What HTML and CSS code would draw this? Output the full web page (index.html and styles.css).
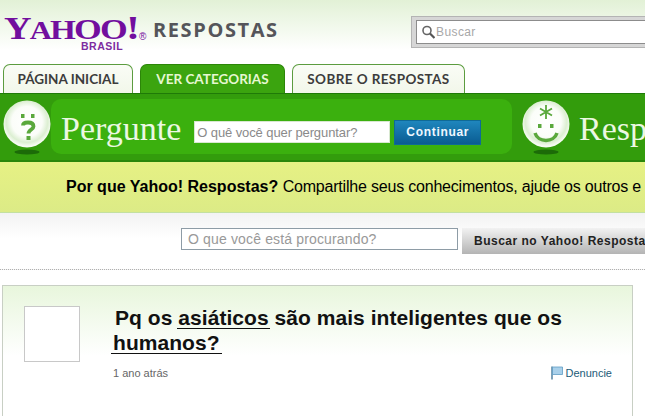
FILE: index.html
```html
<!DOCTYPE html>
<html lang="pt-BR">
<head>
    <meta charset="UTF-8">
    <title>Yahoo! Respostas</title>
    <link rel="stylesheet" href="styles.css">
</head>
<body>
    <div class="page">
        <div class="header">
            <div class="logo">
                <div class="logo-yahoo">
                    <span class="logo-word"><span class="y">Y</span><span class="a">A</span><span class="h">H</span>OO<span class="bang">!</span></span>
                    <span class="logo-reg">®</span>
                    <span class="logo-brasil">BRASIL</span>
                </div>
                <span class="logo-respostas">RESPOSTAS</span>
            </div>
            <div class="top-search">
                <div class="top-search-inner">
                    <svg class="lens" width="13" height="14" viewBox="0 0 13 14">
                        <circle cx="5" cy="5.5" r="4" fill="none" stroke="#666" stroke-width="1.6"/>
                        <path d="M8 8.500L12.500 13" stroke="#555" stroke-width="2.200"/>
                    </svg>
                    <span>Buscar</span>
                </div>
            </div>
        </div>

        <div class="tabs">
            <a class="tab tab-home">PÁGINA INICIAL</a>
            <a class="tab tab-cats active">VER CATEGORIAS</a>
            <a class="tab tab-about">SOBRE O RESPOSTAS</a>
        </div>

        <div class="green-bar">
            <div class="ball">
                <svg width="48" height="56" viewBox="0 0 48 56">
                    <defs>
                        <radialGradient id="shine" cx="50%" cy="45%" r="52%">
                            <stop offset="0" stop-color="#ffffff"/>
                            <stop offset="0.62" stop-color="#fbfdf9"/>
                            <stop offset="0.85" stop-color="#dcefd2"/>
                            <stop offset="1" stop-color="#f6fbf2"/>
                        </radialGradient>
                    </defs>
                    <ellipse cx="24" cy="52" rx="12.500" ry="2.500" fill="#1c6b08"/>
                    <circle cx="24" cy="24" r="23.500" fill="url(#shine)"/>
                    <rect x="18" y="14" width="3.500" height="4" fill="#5aa83c"/>
                    <rect x="28" y="14" width="3.500" height="4" fill="#5aa83c"/>
                    <path d="M20 25.500C20 23 22 22.500 25 22.500C28.500 22.500 30.500 24 30.500 26.500C30.500 29.500 25.500 29.500 25.500 33.500" fill="none" stroke="#5aa83c" stroke-width="3.800"/>
                    <rect x="23.500" y="36" width="4" height="4" fill="#5aa83c"/>
                </svg>
            </div>
            <div class="ask-box">
                <span class="bar-title bar-title-ask">Pergunte</span>
                <div class="ask-input">O quê você quer perguntar?</div>
                <div class="ask-btn">Continuar</div>
            </div>
            <div class="ball second">
                <svg width="48" height="56" viewBox="0 0 48 56">
                    <ellipse cx="24" cy="52" rx="12.500" ry="2.500" fill="#1c6b08"/>
                    <circle cx="24" cy="24" r="23.500" fill="url(#shine)"/>
                    <path d="M24 5V19M18 8.500L30 15.500M18 15.500L30 8.500" stroke="#5aa83c" stroke-width="1.800"/>
                    <rect x="16" y="24" width="3.500" height="4" fill="#5aa83c"/>
                    <rect x="28" y="24" width="3.500" height="4" fill="#5aa83c"/>
                    <path d="M13 33C16 43 32 43 35 33" fill="none" stroke="#5aa83c" stroke-width="3.500"/>
                </svg>
            </div>
            <span class="bar-title bar-title-cut">Respostas</span>
        </div>

        <div class="why-bar">
            <p><b>Por que Yahoo! Respostas?</b> <span class="why-text">Compartilhe seus conhecimentos, ajude os outros e divirta-se</span></p>
        </div>

        <div class="search-row">
            <div class="search-input">O que você está procurando?</div>
            <div class="search-btn">Buscar no Yahoo! Respostas</div>
        </div>

        <div class="question-card">
            <div class="avatar"></div>
            <div class="question-body">
                <h1><span class="first-line">Pq os <a>asiáticos</a> são mais inteligentes que os</span> <a class="wide">humanos?</a></h1>
                <div class="meta">
                    <span class="time">1 ano atrás</span>
                    <span class="report">
                        <svg width="12" height="14" viewBox="0 0 12 14">
                            <path d="M1 0.500V13.500" stroke="#5f8aa6" stroke-width="1.600"/>
                            <path d="M1.500 1H11.500V8.500H1.500Z" fill="#a9d0ea" stroke="#5f9cc4" stroke-width="0.800"/>
                        </svg>
                        Denuncie
                    </span>
                </div>
            </div>
        </div>
    </div>
</body>
</html>
```
FILE: styles.css
```css
html, body {
    margin: 0;
    padding: 0;
    height: 100%;
    overflow: hidden;
}

body {
    background-color: white;
    font-family: "Liberation Sans", Arial, sans-serif;
}

.page {
    width: 645px;
    height: 416px;
    overflow: hidden;
}

.header {
    height: 64px;
    display: flex;
    justify-content: space-between;
    background: linear-gradient(#e2f1d6, #ffffff 50px);
    white-space: nowrap;
}

.logo {
    display: flex;
    padding: 13px 0 0 4px;
}

.logo-yahoo {
    position: relative;
    width: 142px;
    height: 30px;
    color: #720e9e;
}

.logo-word {
    display: inline-block;
    font-family: "Liberation Serif", serif;
    font-weight: bold;
    font-size: 29px;
    line-height: 30px;
    letter-spacing: -1.500px;
    transform: scaleX(1.230);
    transform-origin: left;
}

.logo-word .y {
    font-size: 31px;
}

.logo-word .a {
    font-size: 25px;
}

.logo-word .h {
    font-size: 27px;
}

.logo-word .bang {
    font-size: 34px;
}

.logo-reg {
    position: absolute;
    left: 135px;
    top: 18px;
    font-size: 10px;
    line-height: 12px;
}

.logo-brasil {
    position: absolute;
    left: 77px;
    top: 27px;
    font-size: 10.500px;
    font-weight: bold;
    line-height: 12px;
    letter-spacing: 0.500px;
    color: #7d2c9f;
}

.logo-respostas {
    margin: 7px 0 0 7px;
    font-family: "Open Sans", sans-serif;
    font-size: 20px;
    font-weight: 700;
    line-height: 20px;
    letter-spacing: 1.600px;
    color: #55555a;
}

.top-search {
    margin-top: 16px;
    width: 242px;
    height: 32px;
    margin-right: -8px;
    box-sizing: border-box;
    padding: 3px 4px;
    background-color: #d6d6d6;
    border: 1px solid #b4b4b4;
}

.top-search-inner {
    height: 100%;
    box-sizing: border-box;
    display: flex;
    align-items: center;
    gap: 1px;
    padding-left: 5px;
    background-color: white;
    border: 1px solid #8c8c8c;
    font-size: 12px;
    letter-spacing: 0.400px;
    color: #a8a8a8;
}

.tabs {
    display: flex;
    gap: 7px;
    height: 29px;
    padding-left: 3px;
}

.tab {
    box-sizing: border-box;
    height: 29px;
    padding-top: 6px;
    background: linear-gradient(#fafcf6, #f2f7ea);
    border: 1px solid #5c9c3f;
    border-bottom: none;
    border-radius: 7px 7px 0 0;
    font-family: Lato, sans-serif;
    font-size: 13.500px;
    font-weight: bold;
    color: #3c3c3c;
    text-align: center;
    white-space: nowrap;
}

.tab-home {
    width: 130px;
}

.tab-cats {
    width: 145px;
}

.tab-about {
    width: 173px;
    letter-spacing: 0.400px;
}

.tab.active {
    background: #3ba40f;
    border-color: #2c8608;
    color: #e6f7d2;
}

.green-bar {
    height: 69px;
    box-sizing: border-box;
    display: flex;
    align-items: flex-start;
    background-color: #339c0c;
    border-top: 1px solid #1f7a08;
    border-bottom: 2px solid #2a860a;
    white-space: nowrap;
    overflow: hidden;
}

.ball {
    flex: none;
    width: 48px;
    margin: 6px 0 0 3px;
}

.ball.second {
    margin-left: 10px;
}

.ask-box {
    flex: none;
    display: flex;
    align-items: center;
    width: 461px;
    height: 55px;
    margin-top: 5px;
    box-sizing: border-box;
    padding: 11px 0 0 10px;
    background-color: #3bb00e;
    border-radius: 10px;
}

.bar-title {
    font-family: "Liberation Serif", serif;
    font-size: 34px;
    color: #ecf8e2;
}

.bar-title-ask {
    margin-bottom: 7px;
}

.bar-title-cut {
    margin: 16px 0 0 9px;
}

.ask-input {
    box-sizing: border-box;
    width: 196px;
    height: 22px;
    margin-left: 13px;
    padding: 3px 0 0 2px;
    background-color: white;
    border: 1px solid #d8e8d0;
    font-size: 13px;
    letter-spacing: -0.100px;
    color: #8a8a8a;
}

.ask-btn {
    box-sizing: border-box;
    width: 87px;
    height: 25px;
    margin-left: 4px;
    background: linear-gradient(#1f86bd, #0a5c92);
    border: 1px solid #0f6a96;
    color: #f0f8ff;
    font-size: 12px;
    font-weight: bold;
    letter-spacing: 0.700px;
    line-height: 23px;
    text-align: center;
}

.why-bar {
    height: 51px;
    box-sizing: border-box;
    padding-top: 16px;
    background: linear-gradient(#e6f184, #dceb86);
    border-bottom: 1px solid #c3e0a0;
    white-space: nowrap;
}

.why-bar p {
    margin: 0 0 0 66px;
    font-size: 16px;
    color: #000;
}

.why-text {
    letter-spacing: -0.200px;
}

.search-row {
    height: 57px;
    box-sizing: border-box;
    display: flex;
    align-items: flex-start;
    padding: 15px 0 0 181px;
    background: linear-gradient(#f2f2f2, #ffffff 25px);
    border-bottom: 1px dotted #b0b0b0;
    white-space: nowrap;
}

.search-input {
    flex: none;
    box-sizing: border-box;
    width: 277px;
    height: 22px;
    padding: 2px 0 0 6px;
    background-color: white;
    border: 1px solid #8e9ca6;
    font-size: 14px;
    letter-spacing: 0.150px;
    color: #999;
}

.search-btn {
    flex: none;
    box-sizing: border-box;
    width: 200px;
    height: 26px;
    margin-left: 4px;
    padding: 6px 0 0 12px;
    background: linear-gradient(#f2f2f2, #b4b4b4);
    font-size: 12px;
    font-weight: bold;
    letter-spacing: 0.500px;
    color: #222;
}

.question-card {
    display: flex;
    height: 140px;
    width: 631px;
    margin: 15px 0 0 2px;
    box-sizing: border-box;
    padding: 20px 0 0 21px;
    background: linear-gradient(#e8f6dc, #ffffff 70px);
    border: 1px solid #c8cfc4;
    border-bottom: none;
}

.avatar {
    flex: none;
    width: 56px;
    height: 56px;
    box-sizing: border-box;
    background-color: white;
    border: 1px solid #c8c8c8;
}

.question-body {
    flex: 1;
    margin-left: 33px;
    padding-right: 20px;
}

.question-body h1 {
    margin: -1px 0 0;
    font-size: 21px;
    font-weight: bold;
    line-height: 25px;
    letter-spacing: 0.050px;
    color: #111;
}

.question-body h1 .first-line {
    margin-left: 2px;
}

/* sublinhado fica mais perto do texto que o border-bottom */
.question-body h1 a {
    padding: 0 1px;
    margin: 0 -1px;
    background: linear-gradient(#111, #111) 0 100% / 100% 1px no-repeat;
}

.question-body h1 a.wide {
    padding: 0 2px;
    margin: 0 -2px;
}

.meta {
    display: flex;
    justify-content: space-between;
    align-items: center;
    margin-top: 11px;
    font-size: 11px;
    color: #666;
}

.report {
    display: flex;
    align-items: center;
    gap: 3px;
    color: #1b5a78;
}
```
